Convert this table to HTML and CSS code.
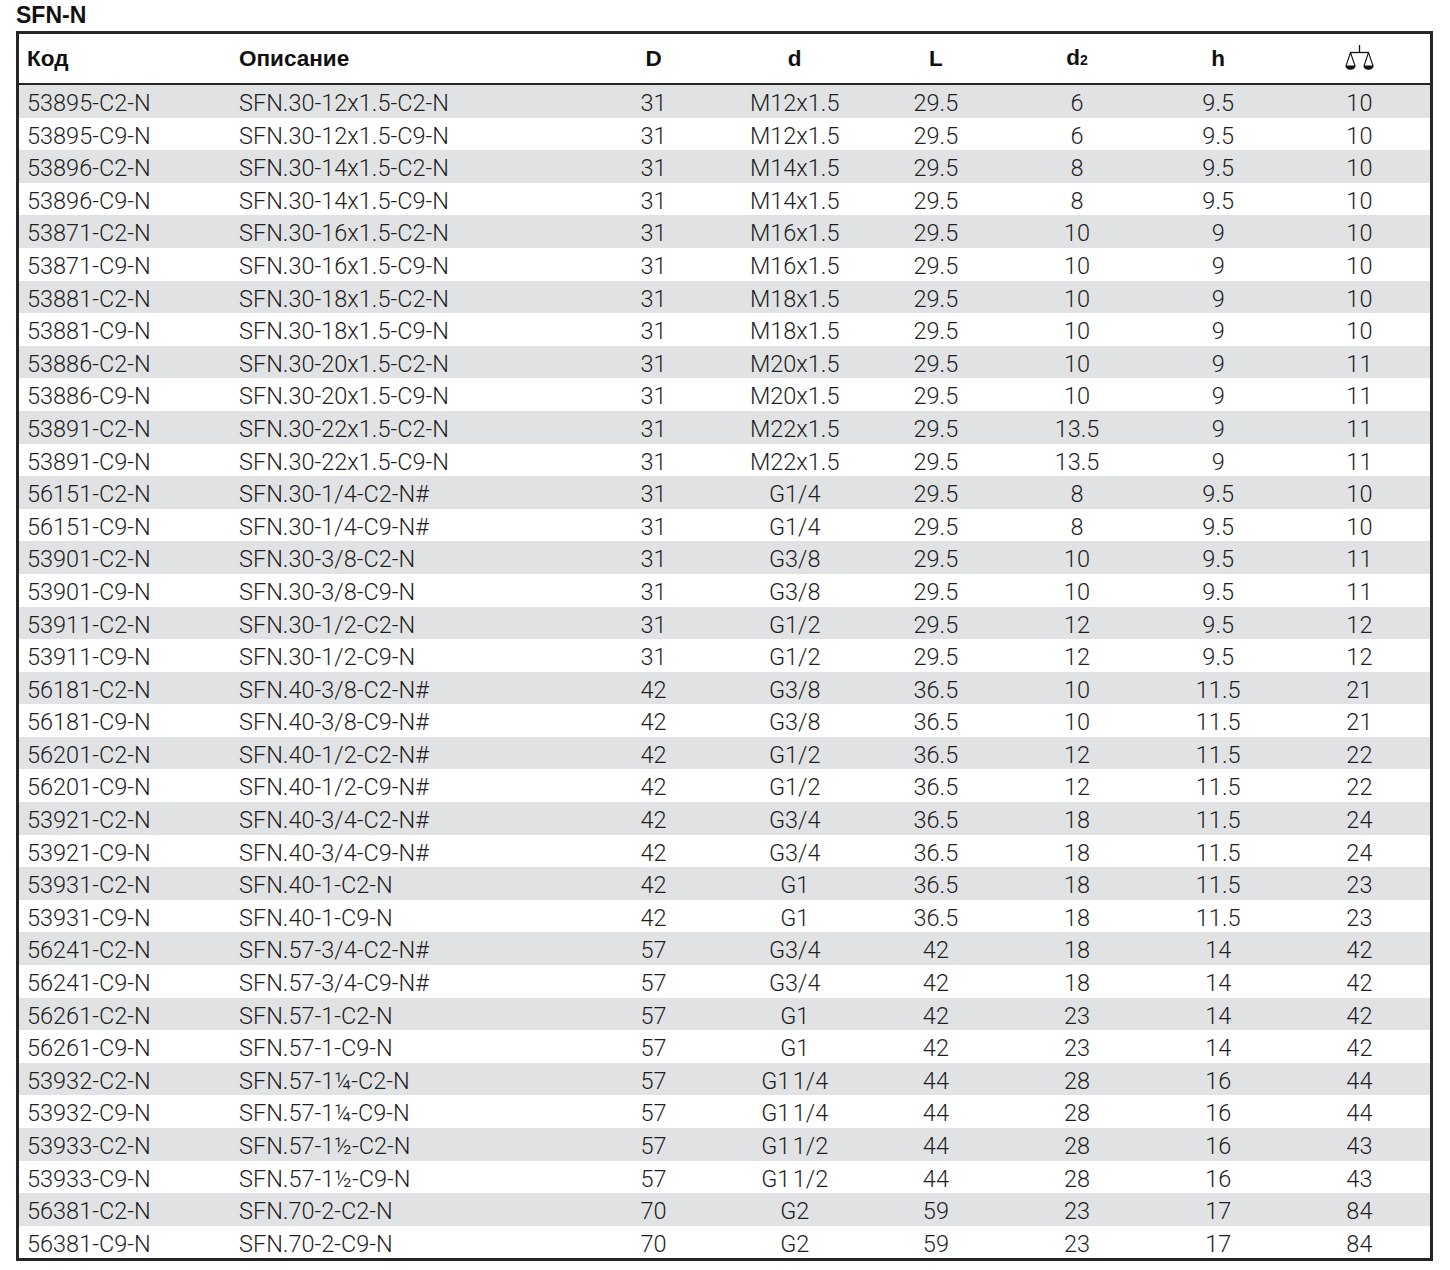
FILE: index.html
```html
<!DOCTYPE html>
<html lang="ru">
<head>
<meta charset="utf-8">
<title>SFN-N</title>
<link rel="stylesheet" href="styles.css">
</head>
<body>
<h1 class="title">SFN-N</h1>
<table class="spec">
<colgroup>
<col class="c-code"><col class="c-desc"><col><col><col><col><col><col>
</colgroup>
<thead>
<tr>
<th class="left">Код</th>
<th class="left">Описание</th>
<th>D</th>
<th>d</th>
<th>L</th>
<th>d<span class="sub">2</span></th>
<th>h</th>
<th><svg class="scale" width="30" height="28" viewBox="-1 -1 30 28" aria-label="вес">
<line x1="14.5" y1="0" x2="14.5" y2="7.5" stroke="#111" stroke-width="1.3"/>
<line x1="5" y1="7.5" x2="24" y2="7.5" stroke="#111" stroke-width="1.3"/>
<path d="M5.5 7.5 L1 21 L10 21 Z" fill="none" stroke="#111" stroke-width="1.1" stroke-linejoin="round"/>
<path d="M23.5 7.5 L19 21 L28 21 Z" fill="none" stroke="#111" stroke-width="1.1" stroke-linejoin="round"/>
<path d="M0.5 21 A5 3.8 0 0 0 10.5 21 Z" fill="#111"/>
<path d="M18.5 21 A5 3.8 0 0 0 28.5 21 Z" fill="#111"/>
</svg></th>
</tr>
</thead>
<tbody>
<tr><td class="left">53895-C2-N</td><td class="left">SFN.30-12x1.5-C2-N</td><td>31</td><td>M12x1.5</td><td>29.5</td><td>6</td><td>9.5</td><td>10</td></tr>
<tr><td class="left">53895-C9-N</td><td class="left">SFN.30-12x1.5-C9-N</td><td>31</td><td>M12x1.5</td><td>29.5</td><td>6</td><td>9.5</td><td>10</td></tr>
<tr><td class="left">53896-C2-N</td><td class="left">SFN.30-14x1.5-C2-N</td><td>31</td><td>M14x1.5</td><td>29.5</td><td>8</td><td>9.5</td><td>10</td></tr>
<tr><td class="left">53896-C9-N</td><td class="left">SFN.30-14x1.5-C9-N</td><td>31</td><td>M14x1.5</td><td>29.5</td><td>8</td><td>9.5</td><td>10</td></tr>
<tr><td class="left">53871-C2-N</td><td class="left">SFN.30-16x1.5-C2-N</td><td>31</td><td>M16x1.5</td><td>29.5</td><td>10</td><td>9</td><td>10</td></tr>
<tr><td class="left">53871-C9-N</td><td class="left">SFN.30-16x1.5-C9-N</td><td>31</td><td>M16x1.5</td><td>29.5</td><td>10</td><td>9</td><td>10</td></tr>
<tr><td class="left">53881-C2-N</td><td class="left">SFN.30-18x1.5-C2-N</td><td>31</td><td>M18x1.5</td><td>29.5</td><td>10</td><td>9</td><td>10</td></tr>
<tr><td class="left">53881-C9-N</td><td class="left">SFN.30-18x1.5-C9-N</td><td>31</td><td>M18x1.5</td><td>29.5</td><td>10</td><td>9</td><td>10</td></tr>
<tr><td class="left">53886-C2-N</td><td class="left">SFN.30-20x1.5-C2-N</td><td>31</td><td>M20x1.5</td><td>29.5</td><td>10</td><td>9</td><td>11</td></tr>
<tr><td class="left">53886-C9-N</td><td class="left">SFN.30-20x1.5-C9-N</td><td>31</td><td>M20x1.5</td><td>29.5</td><td>10</td><td>9</td><td>11</td></tr>
<tr><td class="left">53891-C2-N</td><td class="left">SFN.30-22x1.5-C2-N</td><td>31</td><td>M22x1.5</td><td>29.5</td><td>13.5</td><td>9</td><td>11</td></tr>
<tr><td class="left">53891-C9-N</td><td class="left">SFN.30-22x1.5-C9-N</td><td>31</td><td>M22x1.5</td><td>29.5</td><td>13.5</td><td>9</td><td>11</td></tr>
<tr><td class="left">56151-C2-N</td><td class="left">SFN.30-1/4-C2-N#</td><td>31</td><td>G1/4</td><td>29.5</td><td>8</td><td>9.5</td><td>10</td></tr>
<tr><td class="left">56151-C9-N</td><td class="left">SFN.30-1/4-C9-N#</td><td>31</td><td>G1/4</td><td>29.5</td><td>8</td><td>9.5</td><td>10</td></tr>
<tr><td class="left">53901-C2-N</td><td class="left">SFN.30-3/8-C2-N</td><td>31</td><td>G3/8</td><td>29.5</td><td>10</td><td>9.5</td><td>11</td></tr>
<tr><td class="left">53901-C9-N</td><td class="left">SFN.30-3/8-C9-N</td><td>31</td><td>G3/8</td><td>29.5</td><td>10</td><td>9.5</td><td>11</td></tr>
<tr><td class="left">53911-C2-N</td><td class="left">SFN.30-1/2-C2-N</td><td>31</td><td>G1/2</td><td>29.5</td><td>12</td><td>9.5</td><td>12</td></tr>
<tr><td class="left">53911-C9-N</td><td class="left">SFN.30-1/2-C9-N</td><td>31</td><td>G1/2</td><td>29.5</td><td>12</td><td>9.5</td><td>12</td></tr>
<tr><td class="left">56181-C2-N</td><td class="left">SFN.40-3/8-C2-N#</td><td>42</td><td>G3/8</td><td>36.5</td><td>10</td><td>11.5</td><td>21</td></tr>
<tr><td class="left">56181-C9-N</td><td class="left">SFN.40-3/8-C9-N#</td><td>42</td><td>G3/8</td><td>36.5</td><td>10</td><td>11.5</td><td>21</td></tr>
<tr><td class="left">56201-C2-N</td><td class="left">SFN.40-1/2-C2-N#</td><td>42</td><td>G1/2</td><td>36.5</td><td>12</td><td>11.5</td><td>22</td></tr>
<tr><td class="left">56201-C9-N</td><td class="left">SFN.40-1/2-C9-N#</td><td>42</td><td>G1/2</td><td>36.5</td><td>12</td><td>11.5</td><td>22</td></tr>
<tr><td class="left">53921-C2-N</td><td class="left">SFN.40-3/4-C2-N#</td><td>42</td><td>G3/4</td><td>36.5</td><td>18</td><td>11.5</td><td>24</td></tr>
<tr><td class="left">53921-C9-N</td><td class="left">SFN.40-3/4-C9-N#</td><td>42</td><td>G3/4</td><td>36.5</td><td>18</td><td>11.5</td><td>24</td></tr>
<tr><td class="left">53931-C2-N</td><td class="left">SFN.40-1-C2-N</td><td>42</td><td>G1</td><td>36.5</td><td>18</td><td>11.5</td><td>23</td></tr>
<tr><td class="left">53931-C9-N</td><td class="left">SFN.40-1-C9-N</td><td>42</td><td>G1</td><td>36.5</td><td>18</td><td>11.5</td><td>23</td></tr>
<tr><td class="left">56241-C2-N</td><td class="left">SFN.57-3/4-C2-N#</td><td>57</td><td>G3/4</td><td>42</td><td>18</td><td>14</td><td>42</td></tr>
<tr><td class="left">56241-C9-N</td><td class="left">SFN.57-3/4-C9-N#</td><td>57</td><td>G3/4</td><td>42</td><td>18</td><td>14</td><td>42</td></tr>
<tr><td class="left">56261-C2-N</td><td class="left">SFN.57-1-C2-N</td><td>57</td><td>G1</td><td>42</td><td>23</td><td>14</td><td>42</td></tr>
<tr><td class="left">56261-C9-N</td><td class="left">SFN.57-1-C9-N</td><td>57</td><td>G1</td><td>42</td><td>23</td><td>14</td><td>42</td></tr>
<tr><td class="left">53932-C2-N</td><td class="left">SFN.57-1¼-C2-N</td><td>57</td><td>G1&#8202;1/4</td><td>44</td><td>28</td><td>16</td><td>44</td></tr>
<tr><td class="left">53932-C9-N</td><td class="left">SFN.57-1¼-C9-N</td><td>57</td><td>G1&#8202;1/4</td><td>44</td><td>28</td><td>16</td><td>44</td></tr>
<tr><td class="left">53933-C2-N</td><td class="left">SFN.57-1½-C2-N</td><td>57</td><td>G1&#8202;1/2</td><td>44</td><td>28</td><td>16</td><td>43</td></tr>
<tr><td class="left">53933-C9-N</td><td class="left">SFN.57-1½-C9-N</td><td>57</td><td>G1&#8202;1/2</td><td>44</td><td>28</td><td>16</td><td>43</td></tr>
<tr><td class="left">56381-C2-N</td><td class="left">SFN.70-2-C2-N</td><td>70</td><td>G2</td><td>59</td><td>23</td><td>17</td><td>84</td></tr>
<tr><td class="left">56381-C9-N</td><td class="left">SFN.70-2-C9-N</td><td>70</td><td>G2</td><td>59</td><td>23</td><td>17</td><td>84</td></tr>
</tbody>
</table>
</body>
</html>
```

FILE: styles.css
```css
html, body {
  margin: 0;
  padding: 0;
  background: #ffffff;
}

body {
  font-family: "Liberation Sans", Arial, sans-serif;
  color: #111;
}

.title {
  margin: 0 0 5px 16px;
  padding-top: 4px;
  font-size: 23px;
  line-height: 22px;
  font-weight: bold;
  color: #111;
}

.spec {
  margin-left: 16px;
  width: 1417px;
  table-layout: fixed;
  border-collapse: separate;
  border-spacing: 0;
  border: 3px solid #262626;
}

.c-code { width: 210px; }
.c-desc { width: 354px; }

.spec th {
  font-family: "Liberation Sans", Arial, sans-serif;
  font-weight: bold;
  font-size: 22.5px;
  line-height: 46px;
  height: 46px;
  padding: 1px 0 0 0;
  text-align: center;
  color: #111;
  border-bottom: 2px solid #262626;
  vertical-align: middle;
}

.spec th .sub {
  font-size: 14px;
}

.spec th .scale {
  display: inline-block;
  vertical-align: middle;
  margin-top: -5px;
}

.spec td {
  font-family: Roboto, "Liberation Sans", sans-serif;
  font-weight: 300;
  font-size: 23.5px;
  line-height: 28.6px;
  height: 28.6px;
  padding: 4px 0 0 0;
  text-align: center;
  color: #1e1e1e;
  white-space: nowrap;
}

.spec th.left,
.spec td.left {
  text-align: left;
  padding-left: 8px;
}

.spec th.left + th.left,
.spec td.left + td.left {
  padding-left: 10px;
}

.spec tbody tr:nth-child(odd) td {
  background: #e1e2e4;
}
```
